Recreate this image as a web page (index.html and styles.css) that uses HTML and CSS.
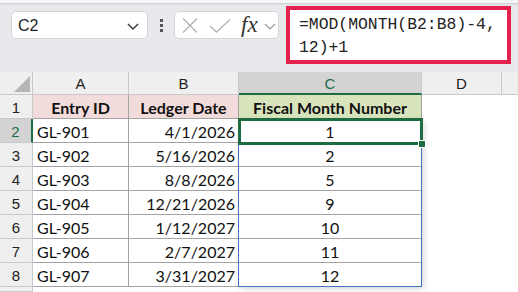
FILE: index.html
```html
<!DOCTYPE html>
<html>
<head>
<meta charset="utf-8">
<link rel="stylesheet" href="styles.css">
</head>
<body>
<div class="app">
  <div class="topstrip"></div>
  <div class="fbar">
    <div class="namebox">
      <span class="ref">C2</span>
      <svg class="chev" width="12" height="7" viewBox="0 0 12 7"><path d="M1 1 L6 6 L11 1" fill="none" stroke="#333" stroke-width="1.4"/></svg>
    </div>
    <div class="dots"><i></i><i></i><i></i></div>
    <div class="fxbox">
      <svg class="ico-x" width="16" height="15" viewBox="0 0 16 15"><path d="M1 0.5 L15 14.5 M15 0.5 L1 14.5" fill="none" stroke="#b3b3b3" stroke-width="1.3"/></svg>
      <svg class="ico-ok" width="22" height="14" viewBox="0 0 22 14"><path d="M1 7 L7.5 13 L21 0.5" fill="none" stroke="#b3b3b3" stroke-width="1.3"/></svg>
      <span class="fx">fx</span>
      <svg class="chev2" width="12" height="7" viewBox="0 0 12 7"><path d="M1 1 L6 6 L11 1" fill="none" stroke="#9a9a9a" stroke-width="1.2"/></svg>
    </div>
    <div class="formula">=MOD(MONTH(B2:B8)-4,<br>12)+1</div>
  </div>
  <div class="sheet">
    <div class="corner"><svg width="33" height="23" viewBox="0 0 33 23"><polygon points="14,20 30,4 30,20" fill="#b5b5b5"/></svg></div>
    <div class="ch">A</div>
    <div class="ch">B</div>
    <div class="ch sel">C</div>
    <div class="ch">D</div>
    <div class="ch last"></div>

    <div class="rh">1</div>
    <div class="c hd pink">Entry ID</div>
    <div class="c hd pink">Ledger Date</div>
    <div class="c hd green">Fiscal Month Number</div>
    <div class="e"></div><div class="e"></div>

    <div class="rh sel">2</div>
    <div class="c l">GL-901</div>
    <div class="c r">4/1/2026</div>
    <div class="c m">1</div>
    <div class="e"></div><div class="e"></div>

    <div class="rh">3</div>
    <div class="c l">GL-902</div>
    <div class="c r">5/16/2026</div>
    <div class="c m">2</div>
    <div class="e"></div><div class="e"></div>

    <div class="rh">4</div>
    <div class="c l">GL-903</div>
    <div class="c r">8/8/2026</div>
    <div class="c m">5</div>
    <div class="e"></div><div class="e"></div>

    <div class="rh">5</div>
    <div class="c l">GL-904</div>
    <div class="c r">12/21/2026</div>
    <div class="c m">9</div>
    <div class="e"></div><div class="e"></div>

    <div class="rh">6</div>
    <div class="c l">GL-905</div>
    <div class="c r">1/12/2027</div>
    <div class="c m">10</div>
    <div class="e"></div><div class="e"></div>

    <div class="rh">7</div>
    <div class="c l">GL-906</div>
    <div class="c r">2/7/2027</div>
    <div class="c m">11</div>
    <div class="e"></div><div class="e"></div>

    <div class="rh">8</div>
    <div class="c l">GL-907</div>
    <div class="c r">3/31/2027</div>
    <div class="c m">12</div>
    <div class="e"></div><div class="e"></div>

    <div class="rh"></div>
    <div class="e"></div><div class="e"></div><div class="e"></div><div class="e"></div><div class="e"></div>

    <div class="spill"></div>
    <div class="active"></div>
    <div class="handle"></div>
  </div>
</div>
</body>
</html>
```
FILE: styles.css
```css
* { box-sizing: border-box; }
html, body { margin: 0; padding: 0; }
body { width: 518px; height: 292px; overflow: hidden; background: #fff; }
.app { width: 518px; height: 292px; display: flex; flex-direction: column; }

.topstrip { height: 3px; background: #f6f6f7; box-shadow: 0 1px 2px rgba(0,0,0,0.12); position: relative; z-index: 1; }

.fbar {
  height: 69px;
  background: #e8e9ec;
  display: flex;
  align-items: flex-start;
}
.namebox {
  margin: 8px 0 0 11px;
  width: 137px; height: 28px;
  background: #fff;
  border: 1px solid #d6d6d9;
  border-radius: 5px;
  display: flex; align-items: center; justify-content: space-between;
  padding: 0 8px 0 6px;
  font-family: "Liberation Sans", Arial, sans-serif;
  font-size: 16px; color: #222;
}
.ref { padding-top: 1px; }
.chev { margin-top: 2px; }
.dots {
  margin: 16px 0 0 12px;
  width: 4px;
  display: flex; flex-direction: column; gap: 2px;
}
.dots i { display: block; width: 3px; height: 3px; background: #555; }
.fxbox {
  margin: 8px 0 0 10px;
  width: 105px; height: 28px;
  background: #fff;
  border: 1px solid #d6d6d9;
  border-radius: 5px;
  display: flex; align-items: center;
  padding: 0 0 0 7px;
}
.ico-x { margin-top: 1px; }
.ico-ok { margin-left: 11px; margin-top: 1px; }
.fx {
  margin-left: 10px;
  font-family: "Liberation Serif", "Times New Roman", serif;
  font-style: italic;
  font-size: 23px;
  color: #333;
  line-height: 1;
  margin-top: -1px;
}
.chev2 { margin-left: 6px; margin-top: 3px; }
.formula {
  margin: 3px 0 0 7px;
  width: 225px; height: 58px;
  background: #fff;
  border: 4px solid #e3234d;
  padding: 3px 0 0 9px;
  font-family: "Liberation Mono", "DejaVu Sans Mono", monospace;
  font-size: 16.4px;
  line-height: 23px;
  color: #222;
  white-space: nowrap;
}

.sheet {
  position: relative;
  flex: 1;
  display: grid;
  grid-template-columns: 33px 96px 110px 183px 80px 1fr;
  grid-template-rows: 23px repeat(8, 24px) 1fr;
  background: #fff;
  font-family: Lato, "Liberation Sans", sans-serif;
}
.corner { background: #efefef; border-right: 1px solid #c9c9c9; border-bottom: 1px solid #c9c9c9; }
.corner svg { display: block; }
.ch {
  background: #efefef;
  border-right: 1px solid #c9c9c9;
  border-bottom: 1px solid #c9c9c9;
  display: flex; align-items: center; justify-content: center;
  font-family: "Liberation Sans", Arial, sans-serif;
  font-size: 15px; color: #222;
  padding-top: 1px;
}
.ch.sel { background: #d3d3d3; color: #1d6b44; border-bottom: 2px solid #1e6c41; }
.ch.last { border-right: none; }
.rh {
  background: #efefef;
  border-right: 1px solid #c9c9c9;
  border-bottom: 1px solid #c9c9c9;
  display: flex; align-items: center; justify-content: center;
  font-family: "Liberation Sans", Arial, sans-serif;
  font-size: 15px; color: #222;
  padding-top: 1px;
}
.rh.sel { background: #d3d3d3; color: #1d6b44; border-right: 2px solid #1e6c41; }
.c {
  border-right: 1px solid #a3a3a3;
  border-bottom: 1px solid #a3a3a3;
  display: flex; align-items: flex-end;
  font-size: 16px; line-height: 16px;
  padding-bottom: 2px;
  color: #111;
  white-space: nowrap;
}
.c.l { padding-left: 4px; }
.c.r { justify-content: flex-end; padding-right: 3px; }
.c.m { justify-content: center; }
.c.hd { justify-content: center; font-weight: bold; }
.pink { background: #f2dcdb; }
.green { background: #d8e4bc; }
.e { background: #fff; }

.spill {
  position: absolute;
  left: 238px; top: 47px;
  width: 184px; height: 168px;
  border: 1px solid #4472c4;
  box-shadow: 2px 2px 6px rgba(0,0,0,0.16);
  pointer-events: none;
}
.active {
  position: absolute;
  left: 238px; top: 46px;
  width: 185px; height: 27px;
  border: 3px solid #1e6c41;
}
.handle {
  position: absolute;
  left: 419px; top: 69px;
  width: 6px; height: 6px;
  background: #1e6c41;
  outline: 1px solid #fff;
}
```
